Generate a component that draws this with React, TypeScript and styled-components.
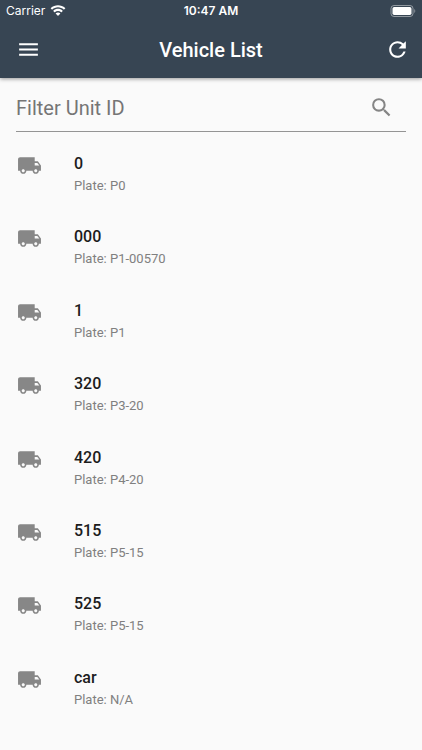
import React, { useState } from "react";
import styled, { createGlobalStyle } from "styled-components";
import { MdLocalShipping, MdMenu, MdRefresh, MdSearch } from "react-icons/md";

const GlobalStyle = createGlobalStyle`
  *, *::before, *::after { box-sizing: border-box; }
  body { margin: 0; background: #fafafa; }
`;

const Screen = styled.div`
  display: flex;
  flex-direction: column;
  min-height: 100vh;
  background: #fafafa;
  font-family: Roboto, sans-serif;
`;

const Header = styled.header`
  background: #374553;
  color: #fff;
  box-shadow: 0 1px 4px rgba(0, 0, 0, 0.4);
`;

const StatusBar = styled.div`
  display: grid;
  grid-template-columns: 1fr auto 1fr;
  align-items: center;
  height: 22px;
  padding: 0 6px;
  font-family: Inter, sans-serif;
  font-size: 12px;
  line-height: 22px;
`;

const Carrier = styled.span`
  display: flex;
  align-items: center;
  gap: 5px;
`;

const Clock = styled.time`
  font-weight: 600;
`;

const Battery = styled.svg`
  justify-self: end;
`;

const Toolbar = styled.div`
  display: grid;
  grid-template-columns: 1fr auto 1fr;
  align-items: center;
  height: 56px;
  padding: 0 12px;
`;

const IconButton = styled.button<{ $end?: boolean }>`
  display: flex;
  justify-self: ${({ $end }) => ($end ? "end" : "start")};
  padding: ${({ $end }) => ($end ? "0 0 2px" : "0 4px 2px")};
  border: 0;
  background: none;
  color: inherit;
  cursor: pointer;
`;

const Title = styled.h1`
  margin: 0;
  font-size: 20px;
  font-weight: 500;
  line-height: 24px;
`;

const Main = styled.main`
  display: flex;
  flex: 1;
  flex-direction: column;
`;

const FilterField = styled.label`
  display: flex;
  align-items: center;
  height: 54px;
  margin: 0 16px;
  padding: 6px 12px 0 0;
  border-bottom: 1px solid #949494;
  color: #858585;
`;

const FilterInput = styled.input`
  flex: 1;
  min-width: 0;
  padding: 0;
  border: 0;
  outline: 0;
  background: none;
  color: #212121;
  font: 400 20px/24px Roboto, sans-serif;

  &::placeholder {
    color: #757575;
    opacity: 1;
  }
`;

const List = styled.ul`
  display: grid;
  flex: 1;
  grid-template-rows: repeat(8, 1fr);
  margin: 0;
  padding: 0 0 31px;
  list-style: none;
`;

const Row = styled.li`
  display: flex;
  gap: 32px;
  min-height: 64px;
  padding: 21px 17px 0;
`;

const Vehicle = styled.div`
  display: flex;
  flex-direction: column;
  gap: 1px;
`;

const UnitId = styled.span`
  color: #1c1c1c;
  font-size: 16px;
  font-weight: 500;
  line-height: 22px;
`;

const Plate = styled.span`
  color: #808080;
  font-size: 13px;
  line-height: 20px;
`;

const vehicles = [
  { id: "0", plate: "P0" },
  { id: "000", plate: "P1-00570" },
  { id: "1", plate: "P1" },
  { id: "320", plate: "P3-20" },
  { id: "420", plate: "P4-20" },
  { id: "515", plate: "P5-15" },
  { id: "525", plate: "P5-15" },
  { id: "car", plate: "N/A" },
];

export default function App() {
  const [filter, setFilter] = useState("");
  const visible = vehicles.filter((v) => v.id.includes(filter));

  return (
    <Screen>
      <GlobalStyle />
      <Header>
        <StatusBar>
          <Carrier>
            Carrier
            <svg width="16" height="12" viewBox="0 0 16 12" fill="#fff" aria-hidden="true">
              <path d="M8 2.3c2.2 0 4.2.9 5.7 2.3.1.1.3.1.4 0l1.1-1.1c.1-.1.1-.3 0-.4C11.2-.7 4.8-.7.8 3.1c-.1.1-.1.3 0 .4l1.1 1.1c.1.1.3.1.4 0C3.8 3.2 5.8 2.3 8 2.3z" />
              <path d="M8 6c1.2 0 2.3.4 3.2 1.2.1.1.3.1.4 0l1.1-1.1c.1-.1.1-.3 0-.4-2.7-2.5-6.7-2.5-9.4 0-.1.1-.1.3 0 .4l1.1 1.1c.1.1.3.1.4 0C5.7 6.4 6.8 6 8 6z" />
              <path d="M10.2 8.3c.1.1.1.3 0 .4L8.2 10.7c-.1.1-.3.1-.4 0l-2-2c-.1-.1-.1-.3 0-.4 1.3-1.1 3.1-1.1 4.4 0z" />
            </svg>
          </Carrier>
          <Clock>10:47 AM</Clock>
          <Battery width="26" height="12" viewBox="0 0 26 12" role="img" aria-label="Battery full">
            <rect x="1" y="0.5" width="22" height="11" rx="3" fill="none" stroke="#fff" strokeOpacity="0.45" />
            <rect x="2.5" y="2" width="19" height="8" rx="1.7" fill="#fff" />
            <path d="M24.3 4v4c1.3-.6 1.3-3.4 0-4z" fill="#fff" fillOpacity="0.45" />
          </Battery>
        </StatusBar>
        <Toolbar>
          <IconButton aria-label="Open menu">
            <MdMenu size={25} />
          </IconButton>
          <Title>Vehicle List</Title>
          <IconButton aria-label="Refresh" $end>
            <MdRefresh size={25} />
          </IconButton>
        </Toolbar>
      </Header>
      <Main>
        <FilterField>
          <FilterInput
            aria-label="Filter Unit ID"
            placeholder="Filter Unit ID"
            value={filter}
            onChange={(e) => setFilter(e.target.value)}
          />
          <MdSearch size={25} aria-hidden="true" />
        </FilterField>
        <List>
          {visible.map((v) => (
            <Row key={v.id}>
              <MdLocalShipping size={25} color="#878787" aria-hidden="true" />
              <Vehicle>
                <UnitId>{v.id}</UnitId>
                <Plate>Plate: {v.plate}</Plate>
              </Vehicle>
            </Row>
          ))}
        </List>
      </Main>
    </Screen>
  );
}
